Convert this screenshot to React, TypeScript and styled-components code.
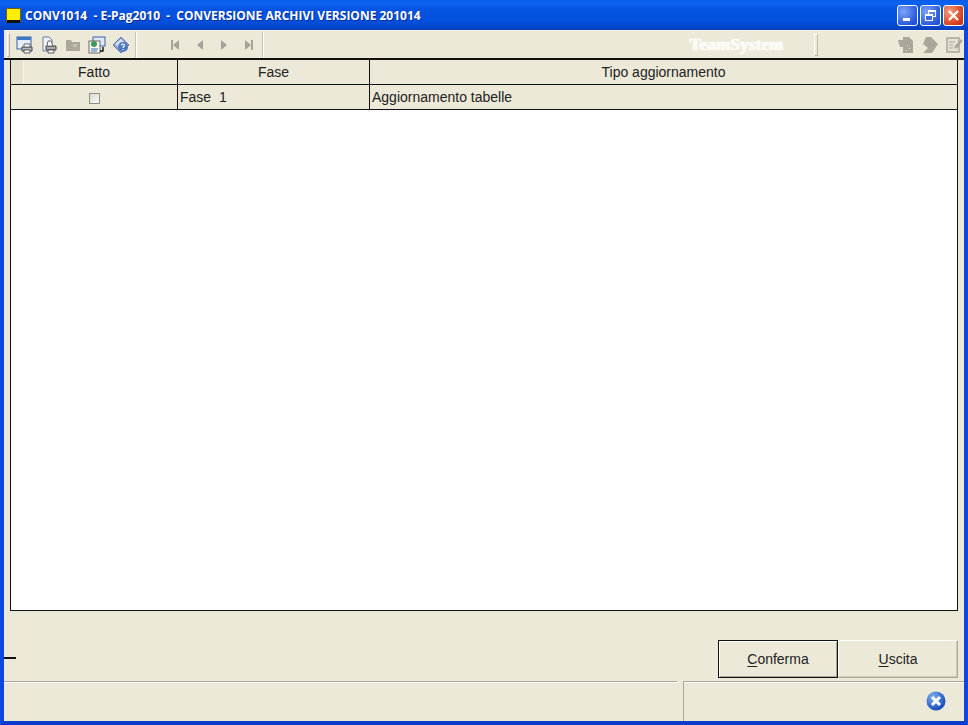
import styled, { createGlobalStyle } from "styled-components";

const Global = createGlobalStyle`
    html, body { margin: 0; padding: 0; background: #0a3fd0; }
    * { box-sizing: border-box; }
`;

const Window = styled.div`
    width: 968px;
    height: 725px;
    display: flex;
    flex-direction: column;
    background: #ece9d8;
    border-left: 4px solid #0a48e0;
    border-right: 4px solid #0a48e0;
    border-bottom: 4px solid #0a3cc8;
    font-family: "Liberation Sans", Arial, sans-serif;
    color: #222;
`;

const TitleBar = styled.div`
    height: 30px;
    margin: 0 -4px;
    padding: 0 4px 0 6px;
    display: flex;
    align-items: center;
    background: linear-gradient(180deg, #0a5ae8 0%, #0a64f0 10%, #0554e2 30%, #0450de 70%, #0446cc 90%, #0a3cb8 100%);
`;

const AppIcon = styled.div`
    width: 15px;
    height: 15px;
    background: linear-gradient(0deg, #111 0 2px, #ffee00 2px);
    border: 1px solid #6b6300;
    border-bottom-color: #111;
    margin-right: 4px;
`;

const Title = styled.div`
    flex: 1;
    color: #fff;
    font-family: "Open Sans", sans-serif;
    font-weight: 700;
    font-size: 12px;
    white-space: pre;
    text-shadow: 1px 1px 0 #0a2c90;
`;

const WinButton = styled.div<{ $close?: boolean }>`
    width: 21px;
    height: 21px;
    margin-left: 2px;
    border: 1px solid #fff;
    border-radius: 3px;
    display: flex;
    align-items: center;
    justify-content: center;
    background: ${(p) =>
        p.$close
            ? "radial-gradient(circle at 30% 30%, #f0a080, #d8401c 70%, #c03010)"
            : "radial-gradient(circle at 30% 30%, #7fa4f8, #2a5ae0 70%, #1c48c8)"};
`;

const Toolbar = styled.div`
    height: 28px;
    display: flex;
    align-items: center;
    padding-left: 3px;
    border-top: 1px solid #f8f6ec;
    background: #ece9d8;
`;

const Grip = styled.div`
    width: 3px;
    height: 24px;
    margin-right: ${(p) => "6px"};
    border: 1px solid #b5b29f;
    border-left-color: #fff;
    border-top-color: #fff;
`;

const ToolSep = styled.div<{ $left: number; $right: number }>`
    width: 2px;
    height: 26px;
    margin-left: ${(p) => p.$left}px;
    margin-right: ${(p) => p.$right}px;
    border-left: 1px solid #c8c5b2;
    border-right: 1px solid #fff;
`;

const ToolGroup = styled.div<{ $gap: number }>`
    display: flex;
    align-items: center;
    gap: ${(p) => p.$gap}px;
`;

const Logo = styled.div`
    margin-left: 409px;
    width: 126px;
    text-align: center;
    color: #fbfaf4;
    font-family: "Liberation Serif", serif;
    font-weight: 700;
    font-size: 17px;
    letter-spacing: 0.2px;
    text-shadow: 0 0 2px #fff, 1px 0 0 #fff;
`;

const EndSep = styled.div`
    width: 4px;
    height: 22px;
    margin-left: 15px;
    margin-right: 79px;
    border: 1px solid #bdbaa6;
    border-left-color: #fff;
    border-top-color: #fff;
`;

const Content = styled.div`
    flex: 1;
    display: flex;
    flex-direction: column;
    border-top: 2px solid #111;
    padding: 0 6px 0 6px;
`;

const Table = styled.div`
    height: 551px;
    border: 1px solid #111;
    border-top: none;
    background: #fff;
    font-size: 14px;
`;

const Row = styled.div<{ $header?: boolean }>`
    display: grid;
    grid-template-columns: 167px 192px 1fr;
    height: 25px;
    background: #ece9d8;
    border-bottom: 1px solid #111;
`;

const Cell = styled.div<{ $center?: boolean }>`
    display: flex;
    align-items: center;
    justify-content: ${(p) => (p.$center ? "center" : "flex-start")};
    padding-left: ${(p) => (p.$center ? 0 : 2)}px;
    border-right: 1px solid #111;
    white-space: pre;
    &:last-child { border-right: none; }
`;

const HeadCell = styled(Cell)`
    justify-content: center;
    padding: 0;
    position: relative;
`;

const RowMarker = styled.div`
    position: absolute;
    left: 0;
    top: 0;
    bottom: 0;
    width: 13px;
    background: #e4e1cf;
    border-right: 1px solid #f6f4ea;
`;

const CheckBox = styled.div`
    width: 11px;
    height: 11px;
    margin-top: 2px;
    border: 1px solid #8f8e82;
    background: linear-gradient(135deg, #d8d8d4, #fbfbf8);
`;

const Actions = styled.div`
    flex: 1;
    position: relative;
    display: flex;
    justify-content: flex-end;
    align-items: flex-start;
    padding-top: 29px;
    padding-right: 0;
`;

const Dash = styled.div`
    position: absolute;
    left: -6px;
    top: 46px;
    width: 12px;
    height: 2px;
    background: #111;
`;

const ActionButton = styled.div<{ $primary?: boolean }>`
    width: 120px;
    height: 38px;
    display: flex;
    align-items: center;
    justify-content: center;
    font-size: 14px;
    background: #ece9d8;
    border: 1px solid;
    border-color: ${(p) => (p.$primary ? "#111" : "#fff #aca899 #aca899 #fff")};
    box-shadow: ${(p) =>
        p.$primary ? "inset 1px 1px 0 #fff, inset -1px -1px 0 #aca899" : "inset -1px -1px 0 #d0cdb9"};
    u { text-underline-offset: 2px; }
`;

const StatusBar = styled.div`
    height: 40px;
    display: grid;
    grid-template-columns: 673px 1fr;
    column-gap: 6px;
    margin-top: 0;
    margin-bottom: 0;
`;

const StatusPanel = styled.div`
    border-top: 1px solid #aca899;
    box-shadow: inset 0 1px 0 #fff;
    display: flex;
    justify-content: flex-end;
    align-items: flex-end;
    padding: 0 18px 10px 0;
    & + & { border-left: 1px solid #aca899; }
`;

function TitleBarButtons() {
    return (
        <>
            <WinButton>
                <svg width="13" height="13" viewBox="0 0 13 13">
                    <rect x="2" y="9" width="7" height="3" fill="#fff" />
                </svg>
            </WinButton>
            <WinButton>
                <svg width="13" height="13" viewBox="0 0 13 13" fill="none" stroke="#fff">
                    <rect x="4.5" y="1.5" width="7" height="6" />
                    <path d="M4.5 2.5h7" />
                    <rect x="1.5" y="5.5" width="7" height="6" fill="#3a66e4" />
                    <path d="M1.5 6.5h7" />
                </svg>
            </WinButton>
            <WinButton $close>
                <svg width="13" height="13" viewBox="0 0 13 13" stroke="#fff" strokeWidth="2.2">
                    <path d="M2 2l9 9M11 2l-9 9" />
                </svg>
            </WinButton>
        </>
    );
}

function FormIcon() {
    return (
        <svg width="18" height="18" viewBox="0 0 18 18">
            <rect x="1" y="1" width="14" height="12" fill="#e6eefa" stroke="#3a62a8" />
            <rect x="1" y="1" width="14" height="3" fill="#3f78c8" />
            <path d="M6 11h10v4H6z" fill="#b8b8b8" stroke="#444" />
            <path d="M8 8h6v3H8z" fill="#fff" stroke="#666" />
            <path d="M8 14h6v3H8z" fill="#fff" stroke="#555" />
        </svg>
    );
}

function PrintIcon() {
    return (
        <svg width="18" height="18" viewBox="0 0 18 18">
            <path d="M3 1h6l3 3v11H3z" fill="#eef2fa" stroke="#6c7c98" />
            <path d="M6 10h10v4H6z" fill="#aaa" stroke="#444" />
            <path d="M8 5l3 0 2 5H7z" fill="#fff" stroke="#666" />
            <path d="M8 14h6v3H8z" fill="#fff" stroke="#555" />
        </svg>
    );
}

function FolderIcon() {
    return (
        <svg width="18" height="18" viewBox="0 0 18 18">
            <path d="M2 4h5l1 2h8v9H2z" fill="#aaa89a" />
            <rect x="9" y="8" width="4" height="3" fill="#c2c0b2" />
        </svg>
    );
}

function MailIcon() {
    return (
        <svg width="18" height="18" viewBox="0 0 18 18">
            <rect x="5" y="1" width="12" height="9" fill="#dfe8f8" stroke="#3a62a8" />
            <rect x="1" y="5" width="11" height="12" fill="#fbfbf4" stroke="#666" />
            <circle cx="6" cy="8" r="3" fill="#3c9a5a" />
            <path d="M3 13h7M3 15h6" stroke="#3a62a8" />
            <path d="M15 11v4h-3" fill="none" stroke="#111" strokeWidth="1.4" />
        </svg>
    );
}

function HelpIcon() {
    return (
        <svg width="18" height="18" viewBox="0 0 18 18">
            <path d="M9 1l8 8-8 8-8-8z" fill="#8ca4cc" stroke="#6078a8" />
            <path d="M3 8l6-5 3 3-6 5z" fill="#d4def0" />
            <circle cx="11" cy="11" r="5" fill="#4c78c0" />
            <path d="M9.5 9.5c0-2 3-2 3 0 0 1-1.500 1-1.500 2.500M11 13v1" stroke="#fff" strokeWidth="1.200" fill="none" />
        </svg>
    );
}

function NavIcon({ dir, bar }: { dir: "left" | "right"; bar?: boolean }) {
    const fill = "#a6a498";
    return (
        <svg width="12" height="14" viewBox="0 0 12 14">
            {dir === "left" ? (
                <path d="M9 2v10L3 7z" fill={fill} />
            ) : (
                <path d="M3 2v10l6-5z" fill={fill} />
            )}
            {bar && <rect x={dir === "left" ? 1 : 9} y="2" width="2" height="10" fill={fill} />}
        </svg>
    );
}

function PageIcon() {
    return (
        <svg width="18" height="18" viewBox="0 0 18 18">
            <path d="M1 4h5V1h6l4 4v12H6v-6H3z" fill="#a9a79a" />
            <path d="M10 9h1v1h-1zM12 12h1v1h-1zM9 14h1v1H9z" fill="#e8e6d8" />
        </svg>
    );
}

function ArrowIcon() {
    return (
        <svg width="18" height="18" viewBox="0 0 18 18">
            <path d="M5 1h5l7 7-6 9H2l5-5-5-4z" fill="#a9a79a" />
        </svg>
    );
}

function NoteIcon() {
    return (
        <svg width="18" height="18" viewBox="0 0 18 18">
            <rect x="2" y="2" width="12" height="14" fill="#e4e2d4" stroke="#a9a79a" strokeWidth="1.500" />
            <path d="M4 6h6M4 9h4M4 12h4" stroke="#a9a79a" />
            <path d="M9 11l7-8 1.500 2-6 8z" fill="#a9a79a" />
        </svg>
    );
}

function CloseBadge() {
    return (
        <svg width="20" height="20" viewBox="0 0 20 20">
            <defs>
                <radialGradient id="badge" cx="35%" cy="30%" r="75%">
                    <stop offset="0" stopColor="#7fb0f4" />
                    <stop offset="1" stopColor="#0f45b8" />
                </radialGradient>
            </defs>
            <circle cx="10" cy="10" r="9.500" fill="url(#badge)" />
            <path d="M6 6l8 8M14 6l-8 8" stroke="#fff" strokeWidth="3" />
        </svg>
    );
}

export default function App() {
    return (
        <Window>
            <Global />
            <TitleBar>
                <AppIcon />
                <Title>{"CONV1014  - E-Pag2010  -  CONVERSIONE ARCHIVI VERSIONE 201014"}</Title>
                <TitleBarButtons />
            </TitleBar>
            <Toolbar>
                <Grip />
                <ToolGroup $gap={6}>
                    <FormIcon />
                    <PrintIcon />
                    <FolderIcon />
                    <MailIcon />
                    <HelpIcon />
                </ToolGroup>
                <ToolSep $left={5} $right={33} />
                <ToolGroup $gap={12}>
                    <NavIcon dir="left" bar />
                    <NavIcon dir="left" />
                    <NavIcon dir="right" />
                    <NavIcon dir="right" bar />
                </ToolGroup>
                <ToolSep $left={8} $right={0} />
                <Logo>TeamSystem</Logo>
                <EndSep />
                <ToolGroup $gap={6}>
                    <PageIcon />
                    <ArrowIcon />
                    <NoteIcon />
                </ToolGroup>
            </Toolbar>
            <Content>
                <Table>
                    <Row $header>
                        <HeadCell>
                            <RowMarker />
                            Fatto
                        </HeadCell>
                        <HeadCell>Fase</HeadCell>
                        <HeadCell>Tipo aggiornamento</HeadCell>
                    </Row>
                    <Row>
                        <Cell $center>
                            <CheckBox />
                        </Cell>
                        <Cell>{"Fase  1"}</Cell>
                        <Cell>Aggiornamento tabelle</Cell>
                    </Row>
                </Table>
                <Actions>
                    <Dash />
                    <ActionButton $primary>
                        <span>
                            <u>C</u>onferma
                        </span>
                    </ActionButton>
                    <ActionButton>
                        <span>
                            <u>U</u>scita
                        </span>
                    </ActionButton>
                </Actions>
            </Content>
            <StatusBar>
                <StatusPanel />
                <StatusPanel>
                    <CloseBadge />
                </StatusPanel>
            </StatusBar>
        </Window>
    );
}
